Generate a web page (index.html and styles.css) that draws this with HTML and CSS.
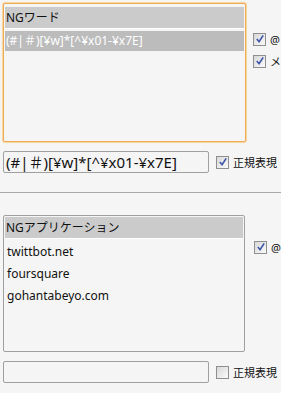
FILE: index.html
```html
<html>

<head>
    <title>NG設定</title>
    <link rel="stylesheet" href="styles.css">
</head>

<body>
    <div class="section">
        <div class="row">
            <div class="listbox focused">
                <div class="list-head">NGワード</div>
                <div class="list-item selected">(#|＃)[¥w]*[^¥x01-¥x7E]</div>
            </div>
            <div class="options">
                <label class="opt"><span class="cb checked"><svg viewBox="0 0 11 11"><path d="M2 5.5 L4.5 8.5 L9 1.5" /></svg></span><span class="opt-text">@リプライ</span></label>
                <label class="opt"><span class="cb checked"><svg viewBox="0 0 11 11"><path d="M2 5.5 L4.5 8.5 L9 1.5" /></svg></span><span class="opt-text">メンション</span></label>
            </div>
        </div>
        <div class="input-row">
            <div class="textbox big">(#|＃)[¥w]*[^¥x01-¥x7E]</div>
            <label class="opt"><span class="cb checked"><svg viewBox="0 0 11 11"><path d="M2 5.5 L4.5 8.5 L9 1.5" /></svg></span><span class="opt-text">正規表現</span></label>
        </div>
    </div>

    <hr class="sep">

    <div class="section second">
        <div class="row">
            <div class="listbox apps">
                <div class="list-head">NGアプリケーション</div>
                <div class="list-item">twittbot.net</div>
                <div class="list-item">foursquare</div>
                <div class="list-item">gohantabeyo.com</div>
            </div>
            <div class="options lower">
                <label class="opt"><span class="cb checked"><svg viewBox="0 0 11 11"><path d="M2 5.5 L4.5 8.5 L9 1.5" /></svg></span><span class="opt-text">@リプライ</span></label>
            </div>
        </div>
        <div class="input-row">
            <div class="textbox"></div>
            <label class="opt"><span class="cb"></span><span class="opt-text">正規表現</span></label>
        </div>
    </div>
</body>

</html>
```

FILE: styles.css
```css
body {
    margin: 0;
    background: #f5f5f5;
    font-family: "Noto Sans", "Noto Sans CJK JP", sans-serif;
    font-size: 12px;
    color: #111;
    overflow: hidden;
    width: 281px;
}

.section {
    padding: 3px 0 0 3px;
}

.second {
    padding-top: 22px;
}

.row {
    display: flex;
    align-items: flex-start;
}

.listbox {
    box-sizing: border-box;
    flex-shrink: 0;
    width: 243px;
    height: 139px;
    border: 1px solid #a0a0a0;
    border-radius: 2px;
    padding: 3px 1px;
    background: #f5f5f5;
}

.listbox.focused {
    border-color: #eeaa55;
    box-shadow: 0 0 1px 1px #f8d49c;
}

.listbox.apps {
    width: 242px;
    height: 137px;
    padding-top: 1px;
}

.list-head {
    height: 21px;
    line-height: 21px;
    background: #cbcbcb;
    padding-left: 1px;
    border-bottom: 1px solid #fff;
    margin-bottom: 2px;
}

.list-item {
    height: 22px;
    line-height: 22px;
    padding-left: 2px;
    white-space: nowrap;
}

.list-item.selected {
    height: 20px;
    line-height: 20px;
    background: #bcbcbc;
    color: #fff;
    padding-left: 1px;
}

.options {
    display: flex;
    flex-direction: column;
    gap: 6px;
    padding: 28px 0 0 7px;
}

.options.lower {
    padding-top: 24px;
    padding-left: 9px;
}

.opt {
    display: flex;
    align-items: center;
    gap: 4px;
    white-space: nowrap;
}

.opt-text {
    font-size: 11px;
}

.cb {
    box-sizing: border-box;
    flex-shrink: 0;
    width: 13px;
    height: 13px;
    border: 1px solid #8e8f8f;
    background: linear-gradient(135deg, #d8d8d8, #fafafa);
    display: flex;
    align-items: center;
    justify-content: center;
}

.cb svg {
    width: 10px;
    height: 10px;
    fill: none;
    stroke: #3c55a8;
    stroke-width: 1.8;
}

.input-row {
    display: flex;
    align-items: center;
    gap: 7px;
    margin-top: 9px;
}

.textbox {
    box-sizing: border-box;
    flex-shrink: 0;
    width: 206px;
    height: 22px;
    border: 1px solid #a0a0a0;
    border-radius: 2px;
    background: #f5f5f5;
    padding-left: 2px;
    white-space: nowrap;
    overflow: hidden;
}

.textbox.big {
    font-size: 15px;
    line-height: 20px;
}

.sep {
    margin: 19px 0 0 0;
    border: none;
    border-top: 1px solid #a8a8a8;
    height: 0;
}
```
